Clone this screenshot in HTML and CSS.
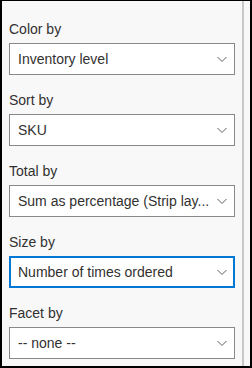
FILE: index.html
```html
<!DOCTYPE html>
<html>
<head>
<meta charset="utf-8">
<link rel="stylesheet" href="styles.css">
</head>
<body>
<div class="frame">
  <div class="panel">
    <div class="field">
      <div class="label">Color by</div>
      <div class="select"><span class="value">Inventory level</span><svg class="chev" width="10" height="7" viewBox="0 0 10 7"><polyline points="0.5,1 5,5.5 9.5,1" fill="none" stroke="#605e5c" stroke-width="1"/></svg></div>
    </div>
    <div class="field">
      <div class="label">Sort by</div>
      <div class="select"><span class="value">SKU</span><svg class="chev" width="10" height="7" viewBox="0 0 10 7"><polyline points="0.5,1 5,5.5 9.5,1" fill="none" stroke="#605e5c" stroke-width="1"/></svg></div>
    </div>
    <div class="field">
      <div class="label">Total by</div>
      <div class="select"><span class="value">Sum as percentage (Strip lay...</span><svg class="chev" width="10" height="7" viewBox="0 0 10 7"><polyline points="0.5,1 5,5.5 9.5,1" fill="none" stroke="#605e5c" stroke-width="1"/></svg></div>
    </div>
    <div class="field">
      <div class="label">Size by</div>
      <div class="select focused"><span class="value">Number of times ordered</span><svg class="chev" width="10" height="7" viewBox="0 0 10 7"><polyline points="0.5,1 5,5.5 9.5,1" fill="none" stroke="#605e5c" stroke-width="1"/></svg></div>
    </div>
    <div class="field">
      <div class="label">Facet by</div>
      <div class="select"><span class="value">-- none --</span><svg class="chev" width="10" height="7" viewBox="0 0 10 7"><polyline points="0.5,1 5,5.5 9.5,1" fill="none" stroke="#605e5c" stroke-width="1"/></svg></div>
    </div>
  </div>
  <div class="scrollbar"></div>
  <div class="gutter"></div>
</div>
</body>
</html>
```

FILE: styles.css
```css
html, body {
  margin: 0;
  padding: 0;
}
body {
  width: 252px;
  height: 368px;
  font-family: "Liberation Sans", Arial, sans-serif;
  color: #323130;
}
.frame {
  box-sizing: border-box;
  width: 252px;
  height: 368px;
  border-style: solid;
  border-color: #000;
  border-width: 1px 2px 2px 2px;
  background: #f8f8f8;
  display: flex;
}
.panel {
  flex: 1;
  padding: 18px 7px 0 7px;
  display: flex;
  flex-direction: column;
  gap: 15px;
}
.field {
  display: flex;
  flex-direction: column;
  gap: 4px;
}
.label {
  font-size: 14px;
  line-height: 20px;
  height: 20px;
}
.select {
  box-sizing: border-box;
  height: 32px;
  background: #fff;
  border: 1px solid #8a8886;
  display: flex;
  align-items: center;
  padding: 0 7px 0 8px;
  font-size: 14px;
}
.select.focused {
  border: 2px solid #0078d4;
  padding: 0 6px 0 7px;
}
.value {
  flex: 1;
  white-space: nowrap;
  overflow: hidden;
}
.chev {
  flex: none;
  margin-top: 1px;
}
.scrollbar {
  width: 2px;
  background: #c8c8c8;
}
.gutter {
  width: 6px;
  background: #f8f8f8;
}
```
